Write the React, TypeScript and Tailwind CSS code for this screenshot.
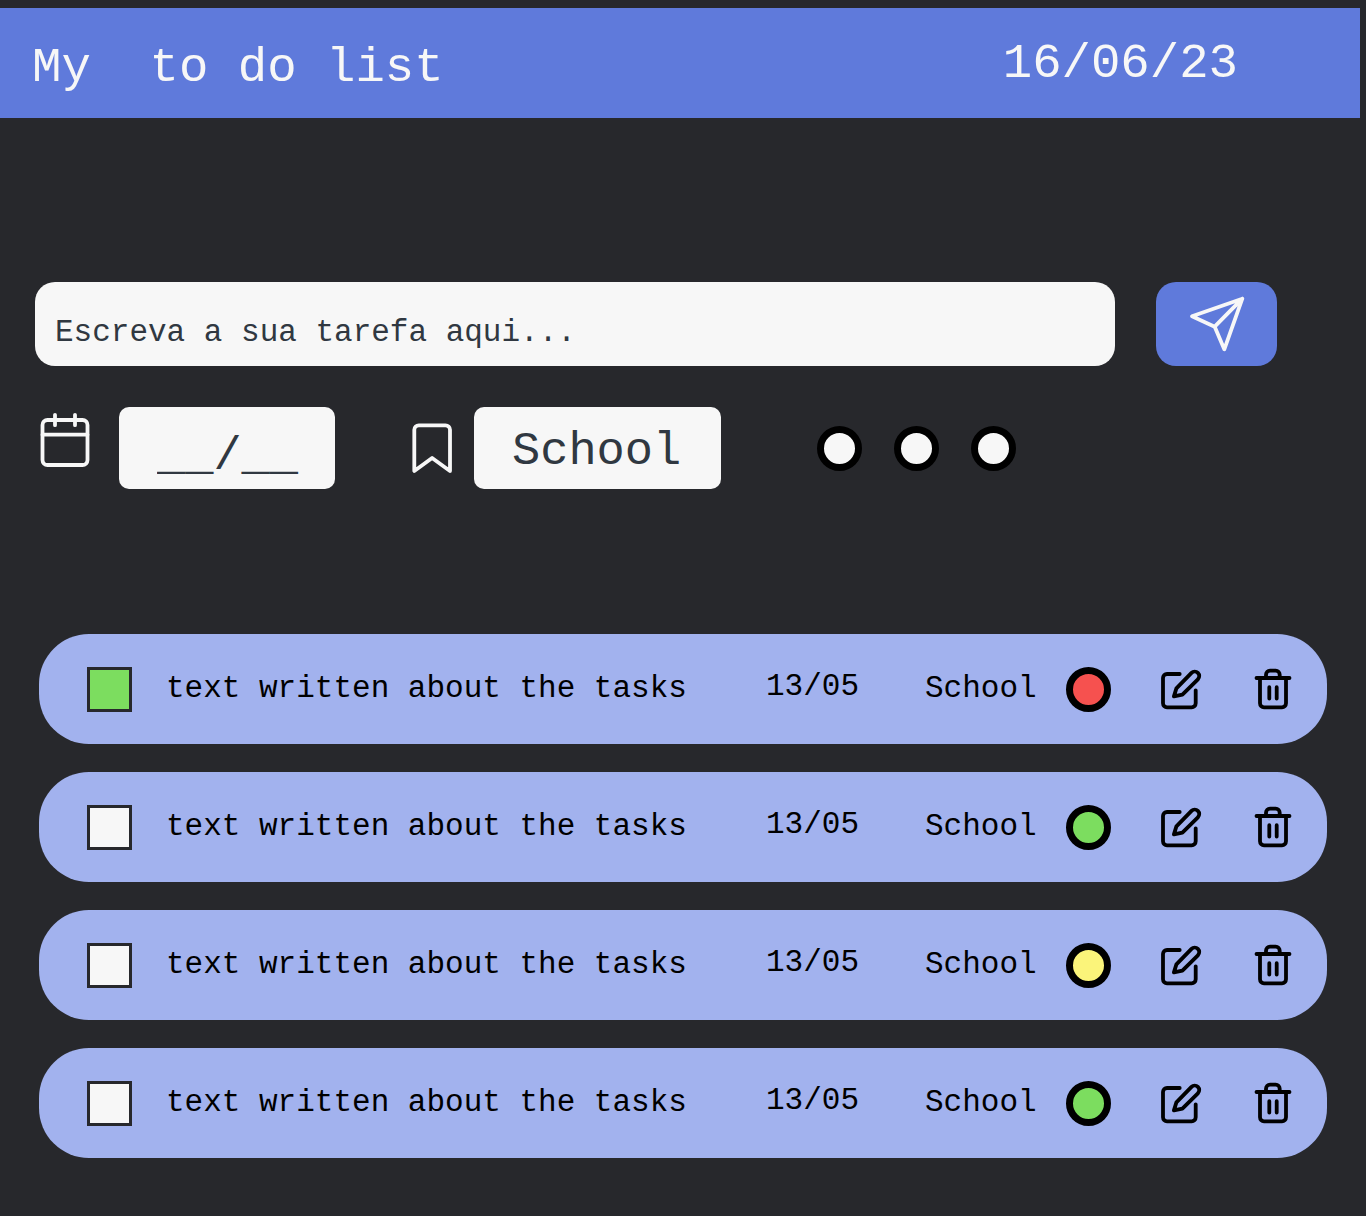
import { useState } from "react";

type Task = { id: number; done: boolean; date: string; tag: string; level: string };

const levelColor: Record<string, string> = {
  high: "bg-[#f6514f]",
  medium: "bg-[#fbf47a]",
  low: "bg-[#7cdd5f]",
};

const initialTasks: Task[] = [
  { id: 1, done: true, date: "13/05", tag: "School", level: "high" },
  { id: 2, done: false, date: "13/05", tag: "School", level: "low" },
  { id: 3, done: false, date: "13/05", tag: "School", level: "medium" },
  { id: 4, done: false, date: "13/05", tag: "School", level: "low" },
];

const stroke = {
  fill: "none",
  stroke: "currentColor",
  strokeWidth: 3.8,
  strokeLinecap: "round" as const,
  strokeLinejoin: "round" as const,
  "aria-hidden": true,
};

function SendIcon() {
  return (
    <svg width="58" height="58" viewBox="0 0 58 58" {...stroke}>
      <path d="M4 21.3 54.3 3.7 36.3 54.3 26.7 31.7Z M54.3 3.7 26.7 31.7" />
    </svg>
  );
}

function CalendarIcon() {
  return (
    <svg width="54" height="57" viewBox="0 0 54 57" className="mt-1 shrink-0 self-start" {...stroke}>
      <rect x="4.5" y="9" width="45" height="45" rx="5" />
      <path d="M4.5 23.7H49.5M17 3.8V14.2M37 3.8V14.2" />
    </svg>
  );
}

function BookmarkIcon() {
  return (
    <svg width="44" height="54" viewBox="0 0 44 54" className="shrink-0" {...stroke}>
      <path d="M4.3 50V8.8a4.5 4.5 0 0 1 4.5-4.5H35.5a4.5 4.5 0 0 1 4.5 4.5V50L22.1 37Z" />
    </svg>
  );
}

function EditIcon() {
  return (
    <svg width="44" height="44" viewBox="0 0 44 44" {...stroke}>
      <path d="M19.7 7H7a4 4 0 0 0-4 4V36.3a4 4 0 0 0 4 4H31.7a4 4 0 0 0 4-4V23.3" />
      <path d="M13.9 29.4 16.4 21.4 31.5 5.9a4.4 4.4 0 0 1 6.4 6.4L22.4 27.6Z" />
    </svg>
  );
}

function TrashIcon() {
  return (
    <svg width="38" height="44" viewBox="0 0 38 44" {...stroke}>
      <path d="M2.5 11H35.5M6 11V36.3a4 4 0 0 0 4 4H28a4 4 0 0 0 4-4V11" />
      <path d="M12 11V7.7a4 4 0 0 1 4-4H21.7a4 4 0 0 1 4 4V11M15.3 20.2V31.5M22.7 20.2V31.5" />
    </svg>
  );
}

export default function App() {
  const [tasks, setTasks] = useState(initialTasks);
  const toggle = (id: number) =>
    setTasks(tasks.map((t) => (t.id === id ? { ...t, done: !t.done } : t)));

  return (
    <div className="min-h-screen bg-[#27282c] pt-2 pb-14 font-['Liberation_Mono',monospace]">
      <header className="mr-1.5 flex items-start justify-between bg-[#5f7adb] pt-6 pr-[122px] pb-[18px] pl-8 text-[49px] leading-[64px] text-[#f7f7f7]">
        <h1 className="pt-1 whitespace-pre-wrap">{"My  to do list"}</h1>
        <time dateTime="2023-06-16">16/06/23</time>
      </header>

      <main>
        <form className="mt-[164px] mr-[89px] ml-[35px]" onSubmit={(e) => e.preventDefault()}>
          <div className="flex gap-[41px]">
            <input
              type="text"
              aria-label="Tarefa"
              placeholder="Escreva a sua tarefa aqui..."
              className="h-[84px] min-w-0 flex-1 rounded-[20px] bg-[#f7f7f7] px-5 pt-4 text-[31px] text-[#303841] outline-none placeholder:text-[#303841] placeholder:opacity-100"
            />
            <button
              type="submit"
              aria-label="Enviar"
              className="flex w-[121px] items-center justify-center rounded-[20px] bg-[#5f7adb] text-[#f7f7f7]"
            >
              <SendIcon />
            </button>
          </div>

          <div className="mt-[41px] flex items-center pl-[3px] text-[47px] text-[#f7f7f7]">
            <label htmlFor="due" aria-label="Data" className="self-start">
              <CalendarIcon />
            </label>
            <input
              id="due"
              type="text"
              placeholder="__/__"
              className="ml-[27px] h-[82px] w-[216px] rounded-[10px] bg-[#f7f7f7] pt-4 pl-[38px] text-[#303841] outline-none placeholder:text-[#303841] placeholder:opacity-100"
            />
            <label htmlFor="tag" aria-label="Categoria" className="ml-[75px]">
              <BookmarkIcon />
            </label>
            <select
              id="tag"
              className="ml-5 h-[82px] w-[247px] appearance-none rounded-[10px] bg-[#f7f7f7] pt-2 pl-[38px] text-[#303841] outline-none"
            >
              <option>School</option>
            </select>
            <fieldset className="ml-24 flex gap-8" aria-label="Prioridade">
              {["high", "medium", "low"].map((level) => (
                <input
                  key={level}
                  type="radio"
                  name="level"
                  value={level}
                  aria-label={level}
                  className="size-[45px] appearance-none rounded-full border-[7px] border-black bg-[#f7f7f7]"
                />
              ))}
            </fieldset>
          </div>
        </form>

        <ul className="mt-[145px] mr-[39px] ml-[39px] flex flex-col gap-7">
          {tasks.map((task) => (
            <li
              key={task.id}
              className="flex items-center rounded-[50px] bg-[#a2b2ee] py-8 pr-[35px] pl-12 text-[31px] leading-[46px] text-black"
            >
              <input
                id={`task-${task.id}`}
                type="checkbox"
                checked={task.done}
                onChange={() => toggle(task.id)}
                className="size-[45px] shrink-0 appearance-none border-[3px] border-[#27282c] bg-[#f7f7f7] checked:bg-[#7cdd5f]"
              />
              <label htmlFor={`task-${task.id}`} className="min-w-0 flex-1 pl-[34px]">
                text written about the tasks
              </label>
              <time className="-mt-1 w-[159px]">{task.date}</time>
              <span className="w-[141px]">{task.tag}</span>
              <span className={`size-[45px] rounded-full border-[7px] border-black ${levelColor[task.level]}`} />
              <button type="button" aria-label="Editar" className="ml-[49px]">
                <EditIcon />
              </button>
              <button type="button" aria-label="Excluir" className="ml-[50px]">
                <TrashIcon />
              </button>
            </li>
          ))}
        </ul>
      </main>
    </div>
  );
}
